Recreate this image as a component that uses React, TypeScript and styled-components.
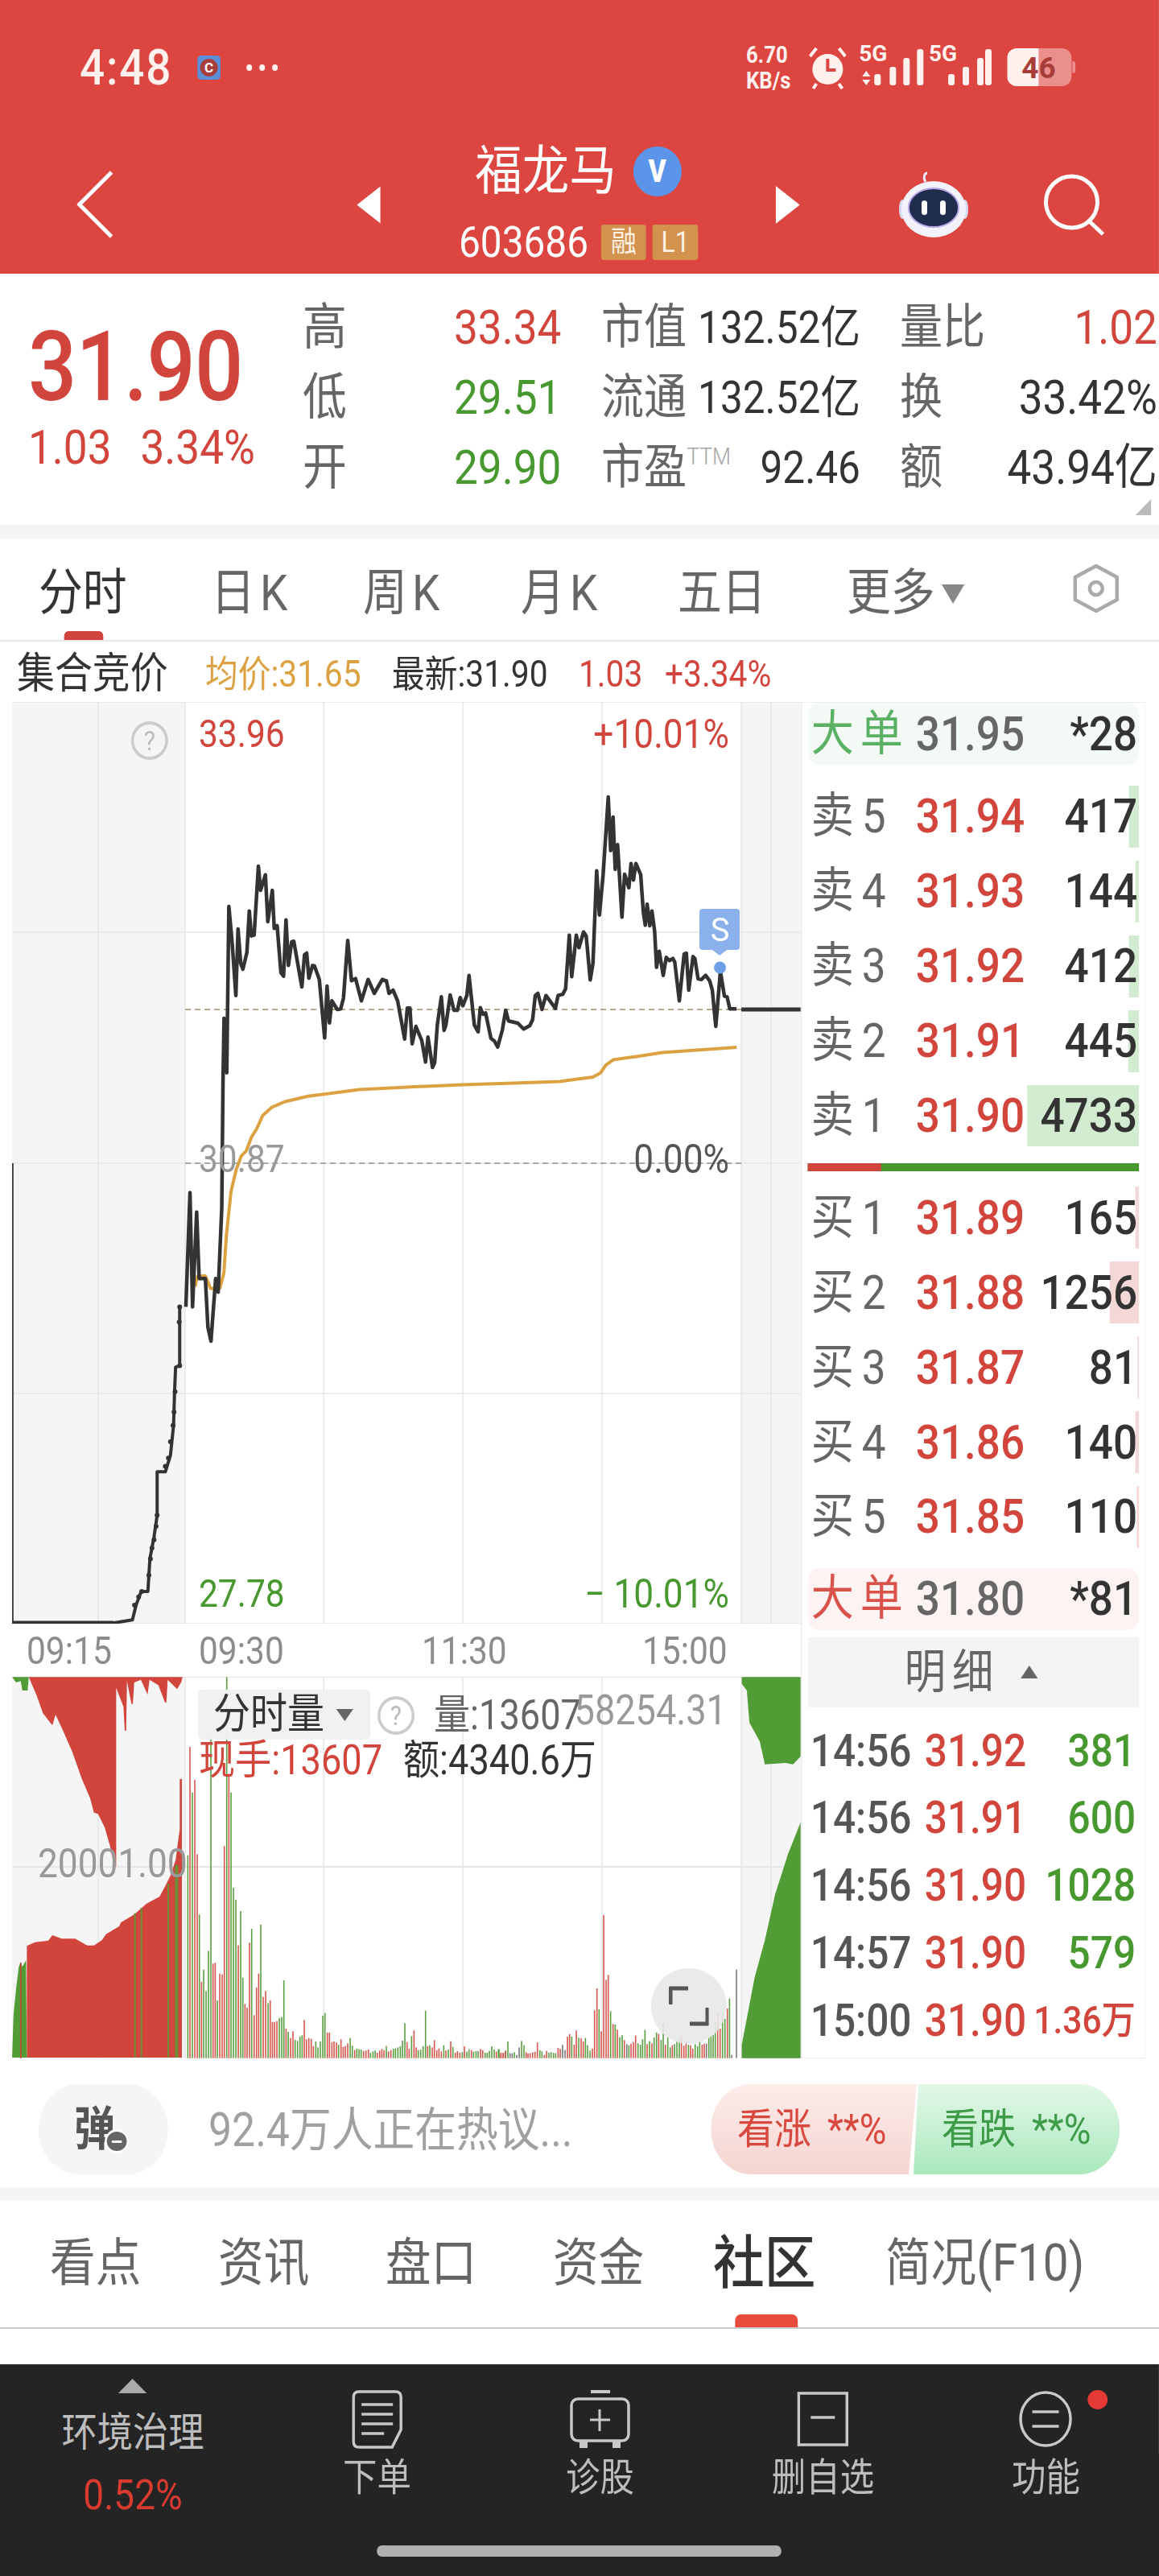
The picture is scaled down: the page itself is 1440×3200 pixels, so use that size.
import React from 'react';
import styled, { createGlobalStyle } from 'styled-components';

// the screenshot is squeezed horizontally, so the whole page is laid out wider and scaled back
const SX = 0.885;
const w = (n: number) => `${(n / SX).toFixed(2)}px`;

const RED = '#d2453c';
const GREEN = '#47982f';
const DARK = '#333333';

const GlobalStyle = createGlobalStyle`
    html, body { margin: 0; padding: 0; background: #fff; overflow: hidden; }
    * { box-sizing: border-box; }
`;

const Page = styled.div`
    width: ${w(1440)};
    height: 3200px;
    transform: scaleX(${SX});
    transform-origin: left top;
    font-family: Roboto, "Noto Sans CJK SC", sans-serif;
    color: ${DARK};
    line-height: 1;
    overflow: hidden;
`;

/* header */
const Header = styled.div`
    height: 340px;
    background: #dc4540;
    color: #fff;
`;
const StatusBar = styled.div`
    height: 168px;
    display: flex;
    align-items: center;
    padding: 0 ${w(104)} 0 ${w(99)};
    color: #fff2ee;
`;
const Clock = styled.span`
    font-size: 62px;
    font-weight: 500;
    letter-spacing: 2px;
    width: ${w(146)};
`;
const Dots = styled.span`
    display: flex;
    gap: ${w(9)};
    margin-left: ${w(32)};
    i { width: 8px; height: 8px; border-radius: 50%; background: #fff2ee; }
`;
const StatusRight = styled.div`
    margin-left: auto;
    display: flex;
    align-items: center;
`;
const Speed = styled.div`
    width: ${w(78)};
    font-size: 29px;
    font-weight: 700;
    line-height: 32px;
`;
const Nav = styled.div`
    height: 172px;
    display: flex;
    align-items: center;
    padding-left: ${w(96)};
`;
const NavTitle = styled.div`
    width: ${w(491)};
    flex: none;
    display: flex;
    flex-direction: column;
    align-items: center;
    gap: 20px;
`;
const TitleLine = styled.div`
    display: flex;
    align-items: center;
    gap: ${w(21)};
    font-size: 66px;
    margin-bottom: 8px;
`;
const VBadge = styled.span`
    width: ${w(60)};
    height: 62px;
    border-radius: 50%;
    background: #5b94e8;
    display: flex;
    align-items: center;
    justify-content: center;
    font-size: 38px;
    font-weight: 900;
`;
const CodeLine = styled.div`
    display: flex;
    align-items: center;
    font-size: 54px;
`;
const Tag = styled.span`
    width: ${w(56)};
    height: 44px;
    margin-left: ${p => w(p.$ml)};
    background: #d4924f;
    border-radius: 4px;
    color: #fff3e6;
    font-size: 36px;
    display: flex;
    align-items: center;
    justify-content: center;
`;

/* quote summary */
const Stats = styled.div`
    position: relative;
    height: 312px;
    display: flex;
    background: #fff;
`;
const PriceBlock = styled.div`
    width: ${w(376)};
    padding: 56px 0 0 ${w(35)};
    color: ${RED};
`;
const BigPrice = styled.div`
    font-size: 120px;
    font-weight: 500;
    line-height: 120px;
    letter-spacing: -1px;
`;
const PriceSub = styled.div`
    display: flex;
    gap: ${w(36)};
    font-size: 60px;
    line-height: 60px;
    margin-top: 10px;
`;
const StatGrid = styled.div`
    display: grid;
    grid-template-columns: ${w(188)} ${w(183)} ${w(322)} ${w(49)} ${w(122)} ${w(198)};
    grid-auto-rows: 87px;
    padding-top: 23px;
    align-items: center;
`;
const StatLabel = styled.span`
    font-size: ${p => p.$size || 60}px;
    color: #666;
`;
const StatValue = styled.span<{ $color?: string; $right?: boolean }>`
    font-size: 60px;
    color: ${p => p.$color || DARK};
    text-align: ${p => (p.$right ? 'right' : 'left')};
`;
const StatPair = styled.div`
    display: flex;
    align-items: center;
    justify-content: space-between;
    font-size: 56px;
`;
const LabelText = styled.span`
    font-size: 60px;
    color: #666;
`;
const Ttm = styled.sup`
    font-size: 30px;
    color: #a5a5a5;
    font-weight: 300;
    vertical-align: 24px;
    line-height: 0;
`;
const CornerMark = styled.i`
    position: absolute;
    right: ${w(10)};
    bottom: 12px;
    width: 0;
    height: 0;
    border-style: solid;
    border-width: 0 0 20px ${w(20)};
    border-color: transparent transparent #bbb transparent;
`;
const Gap = styled.div`
    height: ${p => p.$h}px;
    background: #f5f5f5;
`;

/* period tabs */
const PeriodTabs = styled.div`
    position: relative;
    height: 128px;
    display: flex;
    padding: 37px 0 0 ${w(48)};
    border-bottom: 2px solid #e8e8e8;
`;
const PeriodTab = styled.span<{ $w: number; $on?: boolean; $wide?: boolean }>`
    width: ${p => w(p.$w)};
    font-size: 62px;
    color: ${p => (p.$on ? DARK : '#666')};
    letter-spacing: ${p => (p.$wide ? '7px' : '0')};
`;
const ActiveBar = styled.i`
    position: absolute;
    left: ${w(80)};
    bottom: 0;
    width: ${w(48)};
    height: 11px;
    border-radius: 6px 6px 0 0;
    background: ${RED};
`;
const HexWrap = styled.span`
    position: absolute;
    left: ${w(1333)};
    top: 31px;
`;
const DropTri = styled.i`
    display: inline-block;
    width: 0;
    height: 0;
    margin-left: ${w(8)};
    vertical-align: 8px;
    border-style: solid;
    border-width: 24px ${w(15)} 0 ${w(15)};
    border-color: #888 transparent transparent transparent;
`;
const ChipTri = styled.i`
    width: 0;
    height: 0;
    margin-left: ${w(15)};
    border-style: solid;
    border-width: 15px ${w(11)} 0 ${w(11)};
    border-color: #666 transparent transparent transparent;
`;

const InfoRow = styled.div`
    height: 75px;
    display: flex;
    align-items: center;
    padding: 5px 0 0 ${w(21)};
`;
const InfoText = styled.span<{ $x: number; $color?: string; $size?: number }>`
    width: ${p => w(p.$x)};
    flex: none;
    white-space: nowrap;
    font-size: ${p => p.$size || 46}px;
    color: ${p => p.$color || DARK};
`;

/* chart area */
const ChartRow = styled.div`
    height: 1685px;
    display: flex;
    padding-left: ${w(15)};
`;
const ChartCol = styled.div`
    width: ${w(980)};
    flex: none;
`;
const MainChart = styled.div`
    position: relative;
    height: 1145px;
`;
const VolumeChart = styled.div`
    position: relative;
    height: 474px;
`;
const ChartSvg = styled.svg`
    display: block;
    width: 100%;
    height: 100%;
`;
const TimeAxis = styled.div`
    height: 66px;
    display: flex;
    align-items: center;
    padding: 2px 0 0 ${w(18)};
    font-size: 48px;
    color: #8c8c8c;
`;
const TimeTick = styled.span<{ $w: number }>`
    width: ${p => w(p.$w)};
    flex: none;
`;
const ChartLabel = styled.span<{ $x?: number; $r?: number; $y: number; $color: string; $size?: number }>`
    position: absolute;
    ${p => (p.$r !== undefined ? `right: ${w(p.$r)};` : `left: ${w(p.$x || 0)};`)}
    top: ${p => p.$y}px;
    transform: translateY(-50%);
    color: ${p => p.$color};
    font-size: ${p => p.$size || 48}px;
    white-space: nowrap;
`;
const HelpIcon = styled.span<{ $x: number; $y: number }>`
    position: absolute;
    left: ${p => w(p.$x)};
    top: ${p => p.$y}px;
    width: ${w(46)};
    height: 48px;
    border: 4px solid #ccc;
    border-radius: 50%;
    color: #bbb;
    font-size: 34px;
    display: flex;
    align-items: center;
    justify-content: center;
`;
const VolChip = styled.div`
    position: absolute;
    left: ${w(231)};
    top: 16px;
    width: ${w(214)};
    height: 62px;
    border-radius: 6px;
    background: rgba(240, 240, 240, 0.95);
    display: flex;
    align-items: center;
    padding-left: ${w(19)};
    font-size: 52px;
`;
const ExpandButton = styled.div`
    position: absolute;
    left: ${w(794)};
    top: 362px;
    width: ${w(94)};
    height: 94px;
    border-radius: 50%;
    background: rgba(232, 232, 232, 0.9);
    display: flex;
    align-items: center;
    justify-content: center;
`;

/* order book */
const Book = styled.div`
    width: ${w(428)};
    flex: none;
    height: 1685px;
    padding: 0 ${w(7)};
    border: 1px solid #eee;
    border-width: 1px 1px 1px 2px;
`;
const BigOrder = styled.div<{ $tint: string; $mt: number }>`
    height: 77px;
    margin-top: ${p => p.$mt}px;
    border-radius: 16px;
    background: ${p => p.$tint};
    display: flex;
    align-items: center;
    font-size: 60px;
    font-weight: 500;
    padding: 0 ${w(2)} 0 ${w(4)};
`;
const BigLabel = styled.span<{ $color: string }>`
    width: ${w(130)};
    flex: none;
    color: ${p => p.$color};
    letter-spacing: ${w(8)};
    font-size: 60px;
    font-weight: 400;
`;
const BigPriceCell = styled.span`
    color: #666;
    flex: 1;
`;
const Rows = styled.div<{ $mt: number }>`
    margin-top: ${p => p.$mt}px;
`;
const BookRow = styled.div`
    position: relative;
    height: 92.9px;
    display: flex;
    align-items: center;
    font-size: 60px;
    padding: 0 ${w(2)} 0 ${w(4)};
`;
const RowLabel = styled.span`
    width: ${w(130)};
    flex: none;
    color: #666;
    display: flex;
    gap: ${w(10)};
    position: relative;
`;
const RowPrice = styled.span`
    flex: 1;
    color: ${RED};
    position: relative;
    font-weight: 500;
`;
const RowQty = styled.span`
    position: relative;
    font-weight: 500;
`;
const QtyBar = styled.i<{ $width: number; $color: string }>`
    position: absolute;
    right: 0;
    top: 8px;
    bottom: 8px;
    width: ${p => w(p.$width)};
    background: ${p => p.$color};
`;
const SplitBar = styled.div`
    height: 10px;
    margin-top: 13px;
    display: flex;
    background: ${GREEN};
    i { width: ${w(91)}; background: ${RED}; }
`;
const DetailHead = styled.div`
    height: 87px;
    margin-top: 9px;
    background: #f4f4f4;
    display: flex;
    align-items: center;
    padding-left: ${w(120)};
    font-size: 58px;
    letter-spacing: ${w(8)};
    color: #666;
`;
const UpCaret = styled.i`
    width: 0;
    height: 0;
    margin-left: ${w(26)};
    border-style: solid;
    border-width: 0 ${w(11)} 16px ${w(11)};
    border-color: transparent transparent #666 transparent;
`;
const DetailRow = styled.div`
    height: 83.7px;
    display: flex;
    align-items: center;
    padding: 0 ${w(4)} 0 ${w(3)};
    font-size: 56px;
    font-weight: 500;
`;
const DetailTime = styled.span`
    width: ${w(142)};
    flex: none;
    color: #555;
`;
const DetailPrice = styled.span`
    flex: 1;
    color: ${RED};
`;
const DetailQty = styled.span<{ $color: string; $size?: number }>`
    color: ${p => p.$color};
    font-size: ${p => p.$size || 56}px;
`;

/* comment strip */
const Strip = styled.div`
    height: 160px;
    display: flex;
    align-items: center;
    padding: 32px ${w(49)} 16px ${w(48)};
`;
const Danmu = styled.div`
    position: relative;
    width: ${w(161)};
    height: 112px;
    border-radius: 56px / 56px;
    background: #f5f5f5;
    display: flex;
    align-items: center;
    padding-left: ${w(44)};
    font-size: 58px;
    font-weight: 700;
    color: #555;
`;
const MuteBadge = styled.i`
    position: absolute;
    left: ${w(82)};
    top: 56px;
    width: ${w(30)};
    height: 30px;
    border-radius: 50%;
    background: #666;
    border: 3px solid #fff;
    &::after {
        content: '';
        position: absolute;
        left: 25%;
        right: 25%;
        top: 11px;
        height: 3px;
        background: #fff;
    }
`;
const HotText = styled.span`
    margin-left: ${w(50)};
    padding-top: 2px;
    font-size: 58.5px;
    color: #a0a0a0;
    white-space: nowrap;
`;
const VoteGroup = styled.div`
    margin-left: auto;
    display: flex;
    flex: none;
    height: 112px;
    border-radius: 56px;
    overflow: hidden;
`;
const VoteUp = styled.div`
    width: ${w(256)};
    background: linear-gradient(#fcecea, #f5d5d1);
    clip-path: polygon(0 0, 100% 0, calc(100% - ${w(10)}) 100%, 0 100%);
    color: #d9483f;
    font-size: 52px;
    display: flex;
    align-items: center;
    padding: 2px 0 0 ${w(33)};
`;
const VoteDown = styled.div`
    width: ${w(256)};
    margin-left: ${w(-4)};
    background: linear-gradient(#e3f8e8, #aae8bc);
    clip-path: polygon(${w(6)} 0, 100% 0, 100% 100%, 0 100%);
    color: #3d9b4a;
    font-size: 52px;
    display: flex;
    align-items: center;
    padding: 2px 0 0 ${w(35)};
`;
const Stars = styled.span`
    margin-left: ${w(20)};
`;

/* lower tabs */
const LowerTabs = styled.div`
    position: relative;
    height: 160px;
    display: flex;
    align-items: center;
    padding: 0 0 1px ${w(62)};
    border-bottom: 2px solid #ccc;
`;
const LowerTab = styled.span<{ $w: number; $on?: boolean }>`
    width: ${p => w(p.$w)};
    flex: none;
    white-space: nowrap;
    font-size: ${p => (p.$on ? 72 : 64)}px;
    font-weight: ${p => (p.$on ? 500 : 400)};
    color: ${p => (p.$on ? DARK : '#666')};
`;
const LowerActive = styled.i`
    position: absolute;
    left: ${w(913)};
    bottom: 0;
    width: ${w(78)};
    height: 16px;
    border-radius: 8px 8px 0 0;
    background: #e74c3c;
`;
const Spacer = styled.div`
    height: 44px;
`;

/* footer */
const Footer = styled.div`
    position: relative;
    height: 263px;
    background: #242424;
    display: flex;
    color: #bdbdbd;
`;
const SectorCell = styled.div`
    width: ${w(330)};
    display: flex;
    flex-direction: column;
    align-items: center;
    padding-top: 18px;
    font-size: 50px;
`;
const SectorUp = styled.i`
    width: 0;
    height: 0;
    border-style: solid;
    border-width: 0 ${w(18)} 18px ${w(18)};
    border-color: transparent transparent #aaa transparent;
    margin-bottom: 24px;
`;
const SectorPct = styled.span`
    margin-top: 27px;
    font-size: 52px;
    color: #d93a30;
`;
const FooterItem = styled.div`
    position: relative;
    width: ${w(277)};
    display: flex;
    flex-direction: column;
    align-items: center;
    padding-top: 32px;
    font-size: 48px;
    gap: 12px;
`;
const FooterIcon = styled.svg`
    display: block;
    height: 73px;
    width: ${p => w(p.$w)};
`;
const RedDot = styled.i`
    position: absolute;
    left: ${w(190)};
    top: 32px;
    width: ${w(25)};
    height: 24px;
    border-radius: 50%;
    background: #e53935;
`;
const HomeBar = styled.i`
    position: absolute;
    left: ${w(468)};
    bottom: 24px;
    width: ${w(503)};
    height: 14px;
    border-radius: 7px;
    background: #b0b0b0;
`;

/* ---- chart data, read off the reference ---- */
type P = number[];
const z3 = (a: P[]) => a.map(([x, y]) => [x / 1.568, y / 1.479 + 1000]);
const z8 = (a: P[]) => a.map(([x, y]) => [225 + x / 3, 980 + y / 3]);
const z9 = (a: P[]) => a.map(([x, y]) => [480 + x / 3, 980 + y / 3]);
const z10 = (a: P[]) => a.map(([x, y]) => [15 + x / 3, 2070 + y / 3]);
const z5 = (a: P[]) => a.map(([x, y]) => [x / 1.568, y / 3 + 2060]);
const toPts = (a: P[]) => a.map(([x, y]) => `${x.toFixed(1)},${y.toFixed(1)}`).join(' ');

const PRE_LINE = z3([[220, 1503], [258, 1497], [265, 1470], [275, 1445], [288, 1445], [292, 1385], [300, 1345], [306, 1305], [306, 1225], [322, 1225], [332, 1195], [338, 1140], [340, 1080], [342, 1033], [350, 1030], [350, 922]]);
const PRE_DOTS = z3([[262, 1470], [270, 1455], [276, 1445], [290, 1415], [293, 1385], [296, 1365], [300, 1350], [304, 1325], [306, 1305], [322, 1215], [328, 1200], [332, 1170], [337, 1140], [339, 1115], [341, 1078], [350, 1030], [349, 950], [350, 922]]);
const PRICE_LINE = [
    ...z3([[362, 922], [370, 712], [375, 922], [383, 748], [388, 870], [400, 870], [405, 960], [411, 985], [420, 870], [425, 895], [432, 740]]),
    ...z8([[156, 1100], [160, 855], [170, 1058], [178, 438], [190, 570], [204, 770], [212, 522], [222, 650], [230, 672], [245, 610], [254, 455], [262, 548], [272, 545], [288, 288], [296, 378], [314, 320], [323, 495], [340, 378], [347, 520], [358, 510], [372, 685], [382, 698], [391, 488], [400, 658], [412, 570], [420, 568], [450, 738], [460, 618], [468, 612], [476, 705], [490, 658], [497, 660], [515, 710], [535, 928], [544, 735], [553, 872], [562, 790], [582, 822], [595, 820], [605, 780], [621, 565], [635, 715], [650, 707], [672, 790], [697, 710], [720, 762], [750, 710], [762, 715]]),
    ...z9([[0, 715], [10, 762], [25, 750], [42, 790], [68, 932], [78, 817], [88, 817], [96, 950], [110, 885], [132, 938], [146, 1018], [155, 925], [172, 1038], [180, 1020], [190, 880], [205, 775], [215, 900], [222, 880], [238, 768], [252, 825], [265, 825], [275, 778], [285, 808], [300, 770], [308, 695], [328, 880], [342, 905], [350, 815], [360, 840], [370, 835], [390, 930], [403, 940], [415, 962], [432, 900], [445, 825], [455, 865], [490, 873], [512, 895], [535, 882], [545, 860], [555, 770], [565, 762], [580, 822], [595, 770], [630, 818], [640, 770], [658, 765], [668, 745], [682, 545], [691, 700], [708, 545], [718, 592], [735, 533], [745, 548], [760, 712], [770, 650], [784, 305], [794, 470], [808, 320], [827, 30], [836, 230], [845, 105], [853, 300], [862, 208], [878, 478], [888, 318], [904, 368], [912, 278], [921, 340], [930, 278], [948, 320], [958, 460], [965, 508], [972, 430], [982, 510], [990, 455], [1000, 530], [1007, 665], [1017, 605], [1032, 695], [1043, 628], [1055, 640], [1068, 632], [1075, 645], [1092, 790], [1110, 615], [1118, 612], [1127, 750], [1143, 625], [1150, 632], [1162, 708], [1175, 710], [1190, 695], [1205, 715], [1215, 750], [1228, 885], [1245, 680], [1260, 772], [1270, 775], [1280, 820], [1305, 820]]),
];
const AVG_LINE = z3([[380, 885], [385, 865], [400, 865], [410, 888], [428, 888], [436, 860], [441, 790], [450, 710], [460, 670], [470, 645], [480, 635], [490, 610], [500, 595], [512, 570], [530, 555], [555, 545], [600, 535], [640, 530], [700, 523], [800, 518], [900, 514], [1000, 511], [1090, 508], [1130, 503], [1155, 500], [1170, 492], [1180, 478], [1195, 468], [1240, 462], [1290, 455], [1435, 445]]);

const PRE_RED_TOP = z10([[62, 40], [92, 110], [115, 175], [150, 220], [162, 180], [190, 240], [225, 320], [260, 420], [290, 490], [305, 545], [320, 550], [345, 600], [365, 670], [380, 745], [388, 745], [388, 80], [415, 150], [420, 240], [425, 240], [428, 55], [445, 140], [450, 140], [455, 60], [480, 50], [505, 105], [512, 50], [545, 70], [570, 135], [575, 135], [580, 50], [615, 85], [630, 60], [635, 40]]);
const PRE_GREEN_TOP = z10([[0, 40], [15, 60], [32, 55], [38, 90], [58, 90], [62, 40]]);
const PRE_RED_BOTTOM = z10([[55, 1458], [55, 1042], [85, 1028], [135, 1022], [150, 1002], [185, 1015], [235, 1015], [280, 1040], [305, 1040], [335, 1020], [350, 998], [400, 968], [405, 955], [455, 925], [500, 885], [550, 858], [575, 810], [590, 780], [610, 720], [620, 640], [625, 610], [625, 420], [633, 420], [633, 1458]]);
const PRE_GREEN_BOTTOM = z10([[0, 1458], [5, 1300], [15, 1200], [25, 1120], [32, 1100], [38, 1120], [52, 1095], [55, 1458]]);
const AFTER_TOP = z5([[1445, 70], [1445, 95], [1455, 120], [1460, 240], [1480, 310], [1490, 395], [1530, 390], [1545, 395], [1560, 365], [1560, 70]]);
const AFTER_BOTTOM = z5([[1445, 1490], [1445, 1440], [1470, 1190], [1490, 1050], [1510, 880], [1535, 730], [1560, 610], [1560, 1490]]);

const BARS_LEFT = '10,705,g 18,300,r 27,470,g 36,423,r 45,700,r 53,925,g 61,1175,r 69,1130,g 78,1210,g 87,1060,g 96,255,g 104,1108,r 112,1105,r 120,1245,g 129,1145,r 138,1148,r 146,670,r 155,40,g 163,400,r 171,470,g 180,825,g 189,870,g 198,1040,r 207,912,g 215,1160,g 223,1258,r 231,1272,r 240,1030,r 248,978,g 257,1300,r 266,1197,r 274,1145,r 282,962,g 291,1232,r 300,1210,r 309,1255,g 317,1245,r 325,1325,r 333,1325,r 342,1322,r 351,1310,g 360,1306,g 368,1170,g 376,1350,r 384,1362,g 393,1385,r 402,1360,r 410,1392,g 419,1396,g 428,1380,g 436,1375,g 444,1318,r 452,1390,r 461,1385,r 470,1388,r 478,1415,r 487,1398,g 495,1420,g 504,1398,g 513,1302,g 521,1292,g 530,1365,r 538,1365,r 547,1400,r 555,1398,r 564,1402,r 572,1410,g 581,1390,r 589,1418,r 597,1415,r 606,1405,r 615,1385,g 623,1413,g 632,1430,r 640,1425,g 648,1427,g 656,1428,g 665,1433,r 674,1432,r 683,1428,r 691,1440,g 700,1435,g 708,1432,g 716,1440,r 725,1432,r 733,1426,r 741,1430,r 750,1415,g 758,1435,r 767,1430,r 776,1425,g 784,1424,g 793,1420,g 802,1416,g 810,1395,g 819,1330,g 827,1400,r 835,1425,r 844,1378,g 853,1357,r 861,1420,r 869,1430,g 878,1428,g 887,1415,g 896,1283,g 904,1415,r 912,1412,g 921,1420,r 929,1393,r 938,1430,r 946,1424,r 955,1435,r 964,1412,g 972,1432,r 981,1428,g 990,1397,r 998,1418,g 1007,1440,r 1015,1434,r 1024,1440,r 1033,1438,g 1041,1416,r 1050,1436,g 1058,1427,g 1067,1430,r 1075,1436,g 1084,1434,g 1092,1434,g 1101,1426,r 1109,1430,r 1118,1440,g 1126,1440,g 1134,1433,g 1143,1416,g 1152,1428,g 1160,1436,r 1168,1426,g 1177,1440,r 1186,1440,r 1194,1432,g';
const BARS_RIGHT = '0,828,g 7,842,r 15,842,r 24,833,r 33,798,g 41,842,k 49,842,k 57,838,g 66,848,k 75,820,k 84,796,g 93,812,g 101,838,r 108,843,r 116,842,r 125,838,r 134,836,r 143,802,r 152,830,g 160,835,g 169,848,r 177,833,r 186,840,g 194,838,g 203,840,g 211,842,g 220,822,r 228,826,r 237,811,k 246,830,k 255,780,r 263,770,r 271,780,g 280,810,r 288,757,r 297,784,g 306,786,r 314,798,r 322,785,g 330,812,g 339,832,g 348,825,r 356,682,r 365,600,r 373,678,g 381,760,r 390,327,r 399,568,r 407,550,r 416,685,g 425,733,r 433,735,g 441,754,r 450,782,g 459,775,g 467,793,r 476,808,k 484,812,g 492,806,r 501,800,r 509,776,r 518,805,g 527,810,g 535,790,g 544,755,g 552,808,r 561,797,g 570,805,r 578,783,g 587,765,g 595,770,r 604,792,g 612,732,g 620,810,r 629,782,g 638,820,g 646,812,r 654,808,g 663,796,g 672,782,g 680,775,r 689,814,r 697,794,r 706,810,g 714,812,r 722,825,r 731,808,g 740,816,g 748,798,g 757,810,r 765,806,r 773,806,k 782,780,g 790,776,g 798,772,g 806,726,g 815,694,r 824,750,r 833,692,g 842,714,g 851,675,r 859,638,g 867,848,k 885,530,k';
const BAR_COLOR: Record<string, string> = { r: '#d5564e', g: '#5b9f42', k: '#777' };
const BOTTOM = 2556.7;
const parseBars = (s: string, x0: number, y0: number) => s.split(' ').map(item => {
    const [x, y, c] = item.split(',');
    return { x: x0 + Number(x) / 3, top: y0 + Number(y) / 3, color: BAR_COLOR[c] };
});
const VOLUME_BARS = [...parseBars(BARS_LEFT, 230, 2070), ...parseBars(BARS_RIGHT, 620, 2270)];

const GRID_X = [122, 230, 402, 575, 748, 921, 958];

const SELLS = [
    { n: 5, price: '31.94', qty: '417', bar: 12 },
    { n: 4, price: '31.93', qty: '144', bar: 4 },
    { n: 3, price: '31.92', qty: '412', bar: 12 },
    { n: 2, price: '31.91', qty: '445', bar: 13 },
    { n: 1, price: '31.90', qty: '4733', bar: 139 },
];
const BUYS = [
    { n: 1, price: '31.89', qty: '165', bar: 4 },
    { n: 2, price: '31.88', qty: '1256', bar: 36 },
    { n: 3, price: '31.87', qty: '81', bar: 2 },
    { n: 4, price: '31.86', qty: '140', bar: 4 },
    { n: 5, price: '31.85', qty: '110', bar: 3 },
];
const TRADES = [
    { t: '14:56', p: '31.92', q: '381', c: GREEN },
    { t: '14:56', p: '31.91', q: '600', c: GREEN },
    { t: '14:56', p: '31.90', q: '1028', c: GREEN },
    { t: '14:57', p: '31.90', q: '579', c: GREEN },
];

const ICON_STROKE = '#c8c8c8';

const CIcon = () => (
    <svg width={w(29)} height="30" viewBox="0 0 29 30" preserveAspectRatio="none">
        <rect width="29" height="30" rx="5" fill="#5b8fd8" />
        <circle cx="14.5" cy="15" r="11" fill="#a83e3c" />
        <text x="14.5" y="21" textAnchor="middle" fontSize="17" fontWeight="700" fill="#fff" fontFamily="Roboto">C</text>
    </svg>
);

const AlarmIcon = () => (
    <svg width={w(46)} height="54" viewBox="0 0 46 54" preserveAspectRatio="none" style={{ marginRight: w(16) }}>
        <circle cx="23" cy="29" r="19" fill="#fff2ee" />
        <path d="M1 13 9 3M45 13 37 3M9 47l-4 6M37 47l4 6" stroke="#fff2ee" strokeWidth="4" />
        <path d="M23 16v14h10" stroke="#dc4540" strokeWidth="4" fill="none" />
    </svg>
);

const Signal = ({ arrows, bars }: { arrows?: boolean; bars: number[] }) => (
    <svg width={w(arrows ? 87 : 78)} height="72" viewBox={`0 0 ${arrows ? 87 : 78} 72`} preserveAspectRatio="none">
        <text x="0" y="28" fontSize="28" fontWeight="700" fill="#fff2ee" fontFamily="Roboto">5G</text>
        {arrows && <path d="M4 47l5-7 5 7zM4 51h10l-5 7z" fill="#fff2ee" />}
        {bars.map((x, i) => (
            <rect key={x} x={x} y={[44, 35, 24, 13][i]} width="8" height={[14, 23, 34, 45][i]} rx="3" fill="#fff2ee" />
        ))}
    </svg>
);

const Battery = () => (
    <svg width={w(85)} height="48" viewBox="0 0 85 48" preserveAspectRatio="none" style={{ marginLeft: w(19) }}>
        <rect x="0" y="0" width="80" height="47" rx="12" fill="#fff" fillOpacity="0.4" />
        <path d="M12 0h27v47H12A12 12 0 0 1 0 35V12A12 12 0 0 1 12 0z" fill="#fff2ee" />
        <path d="M81 16c3 0 4 2 4 4v7c0 2-1 4-4 4z" fill="#fff" fillOpacity="0.4" />
        <text x="39" y="37" textAnchor="middle" fontSize="37" fontWeight="700" fill="#a83c38" fontFamily="Roboto">46</text>
    </svg>
);

const BackIcon = () => (
    <svg width={w(46)} height="84" viewBox="0 0 46 84" preserveAspectRatio="none" style={{ flex: 'none' }}>
        <path d="M43 2 3 42l40 40" fill="none" stroke="#fff" strokeWidth="5" />
    </svg>
);

const SwitchArrow = ({ right }: { right?: boolean }) => (
    <svg width={w(30)} height="47" viewBox="0 0 30 47" preserveAspectRatio="none" style={{ flex: 'none' }}>
        <path d={right ? 'M0 0l30 23.5L0 47z' : 'M30 0 0 23.5 30 47z'} fill="#fff" />
    </svg>
);

const RobotIcon = () => (
    <svg width={w(88)} height="82" viewBox="0 0 88 82" preserveAspectRatio="none" style={{ flex: 'none', marginLeft: w(122) }}>
        <path d="M34 13c-3-4-2-11 2-11" stroke="#e9e6f5" strokeWidth="3" fill="none" />
        <ellipse cx="5" cy="47" rx="4" ry="12" fill="#d7d9f2" />
        <ellipse cx="83" cy="47" rx="4" ry="12" fill="#d7d9f2" />
        <ellipse cx="44" cy="47" rx="40" ry="35" fill="#f2f2fb" />
        <ellipse cx="44" cy="45" rx="31" ry="24" fill="#1f2c4c" stroke="#b4a6e6" strokeWidth="2" />
        <rect x="29" y="36" width="7" height="18" rx="3.5" fill="#fff" />
        <rect x="52" y="36" width="7" height="18" rx="3.5" fill="#fff" />
    </svg>
);

const SearchIcon = () => (
    <svg width={w(78)} height="78" viewBox="0 0 78 78" preserveAspectRatio="none" style={{ flex: 'none', marginLeft: w(93) }}>
        <circle cx="35" cy="36" r="32" fill="none" stroke="#fff" strokeWidth="5" />
        <path d="M57 60 74 76" stroke="#fff" strokeWidth="5" />
    </svg>
);

const HexIcon = () => (
    <svg width={w(58)} height="62" viewBox="0 0 58 62" preserveAspectRatio="none">
        <path d="M29 3 55 17v28L29 59 3 45V17z" fill="none" stroke="#aaa" strokeWidth="4.5" strokeLinejoin="round" />
        <circle cx="29" cy="31" r="8" fill="none" stroke="#aaa" strokeWidth="4.5" />
    </svg>
);

const PriceChart = () => (
    <ChartSvg viewBox="15 872 980 1145" preserveAspectRatio="none">
        <rect x="15" y="872" width="215" height="1145" fill="#f5f5f5" />
        <rect x="921" y="872" width="74" height="1145" fill="#f5f5f5" />
        {GRID_X.map(x => <line key={x} x1={x} x2={x} y1="872" y2="2017" stroke="#e6e6e6" strokeWidth="1.5" />)}
        {[872, 1158, 1445, 1731, 2017].map(y => <line key={y} x1="15" x2="995" y1={y} y2={y} stroke="#e6e6e6" strokeWidth="1.5" />)}
        <line x1="230" x2="921" y1="1254" y2="1254" stroke="#b9a988" strokeWidth="2" strokeDasharray="7 5" />
        <line x1="230" x2="921" y1="1445" y2="1445" stroke="#a8a8a8" strokeWidth="2" strokeDasharray="7 5" />
        <polyline points={toPts(AVG_LINE)} fill="none" stroke="#dca242" strokeWidth="4" strokeLinejoin="round" />
        <line x1="15" x2="15" y1="1445" y2="2017" stroke={DARK} strokeWidth="3.5" />
        <line x1="15" x2="141" y1="2016" y2="2016" stroke={DARK} strokeWidth="5" />
        <polyline points={toPts(PRE_LINE)} fill="none" stroke={DARK} strokeWidth="4" strokeLinejoin="round" />
        {PRE_DOTS.map(([x, y]) => <circle key={`${x}-${y}`} cx={x} cy={y} r="3" fill={DARK} />)}
        <polyline points={toPts(PRICE_LINE)} fill="none" stroke={DARK} strokeWidth="4.5" strokeLinejoin="round" />
        <line x1="921" x2="995" y1="1254" y2="1254" stroke={DARK} strokeWidth="5" />
        <path d="M873 1129h42q4 0 4 4v43q0 4-4 4h-12l-9 7-9-7h-12q-4 0-4-4v-43q0-4 4-4z" fill="#8ab1ec" />
        <circle cx="894.5" cy="1202" r="7.5" fill="#6f9fe8" />
        <text x="894.5" y="1169" textAnchor="middle" fontSize="40" fill="#fff" fontFamily="Roboto">S</text>
    </ChartSvg>
);

const VolumeSvg = () => (
    <ChartSvg viewBox="15 2083 980 474" preserveAspectRatio="none">
        <rect x="15" y="2083" width="215" height="474" fill="#f5f5f5" />
        <rect x="921" y="2083" width="74" height="474" fill="#f5f5f5" />
        {GRID_X.map(x => <line key={x} x1={x} x2={x} y1="2083" y2="2557" stroke="#e6e6e6" strokeWidth="1.5" />)}
        <line x1="15" x2="995" y1="2083" y2="2083" stroke="#e6e6e6" strokeWidth="2" />
        <line x1="15" x2="995" y1="2319" y2="2319" stroke="#e6e6e6" strokeWidth="2" />
        <polygon points={toPts(PRE_RED_TOP)} fill={RED} />
        <polygon points={toPts(PRE_GREEN_TOP)} fill="#519c35" />
        <polygon points={toPts(PRE_RED_BOTTOM)} fill={RED} />
        <polygon points={toPts(PRE_GREEN_BOTTOM)} fill="#519c35" />
        <rect x="25" y="2438" width="1.5" height="119" fill={RED} />
        {[458, 482, 582, 610].map((x, i) => (
            <rect key={x} x={15 + (x - 3) / 3} y={2070 + [920, 900, 810, 740][i] / 3} width={i === 3 ? 4 : 2} height={(1458 - [920, 900, 810, 740][i]) / 3} fill="#6c8f36" />
        ))}
        <polygon points={toPts(AFTER_TOP)} fill="#519c35" />
        <polygon points={toPts(AFTER_BOTTOM)} fill="#519c35" />
        {VOLUME_BARS.map((b, i) => (
            <rect key={i} x={b.x - 0.8} y={b.top} width="1.6" height={BOTTOM - b.top} fill={b.color} />
        ))}
    </ChartSvg>
);

const OrderRow = ({ side, row, tint }: { side: string; row: typeof SELLS[number]; tint: string }) => (
    <BookRow>
        <QtyBar $width={row.bar} $color={tint} />
        <RowLabel>{side}<span>{row.n}</span></RowLabel>
        <RowPrice>{row.price}</RowPrice>
        <RowQty>{row.qty}</RowQty>
    </BookRow>
);

const App = () => (
    <Page>
        <GlobalStyle />
        <Header>
            <StatusBar>
                <Clock>4:48</Clock>
                <CIcon />
                <Dots><i /><i /><i /></Dots>
                <StatusRight>
                    <Speed>6.70<br />KB/s</Speed>
                    <AlarmIcon />
                    <Signal arrows bars={[19, 38, 55, 72]} />
                    <Signal bars={[24, 42, 60, 70]} />
                    <Battery />
                </StatusRight>
            </StatusBar>
            <Nav>
                <BackIcon />
                <span style={{ width: w(301) }} />
                <SwitchArrow />
                <NavTitle>
                    <TitleLine>福龙马<VBadge>V</VBadge></TitleLine>
                    <CodeLine>603686<Tag $ml={16}>融</Tag><Tag $ml={8}>L1</Tag></CodeLine>
                </NavTitle>
                <SwitchArrow right />
                <RobotIcon />
                <SearchIcon />
            </Nav>
        </Header>

        <Stats>
            <PriceBlock>
                <BigPrice>31.90</BigPrice>
                <PriceSub><span>1.03</span><span>3.34%</span></PriceSub>
            </PriceBlock>
            <StatGrid>
                <StatLabel $size={62}>高</StatLabel>
                <StatValue $color={RED}>33.34</StatValue>
                <StatPair><LabelText>市值</LabelText><span>132.52亿</span></StatPair>
                <span />
                <LabelText>量比</LabelText>
                <StatValue $color={RED} $right>1.02</StatValue>

                <StatLabel $size={62}>低</StatLabel>
                <StatValue $color={GREEN}>29.51</StatValue>
                <StatPair><LabelText>流通</LabelText><span>132.52亿</span></StatPair>
                <span />
                <LabelText>换</LabelText>
                <StatValue $right>33.42%</StatValue>

                <StatLabel $size={62}>开</StatLabel>
                <StatValue $color={GREEN}>29.90</StatValue>
                <StatPair><span><LabelText>市盈</LabelText><Ttm>TTM</Ttm></span><span>92.46</span></StatPair>
                <span />
                <LabelText>额</LabelText>
                <StatValue $right>43.94亿</StatValue>
            </StatGrid>
            <CornerMark />
        </Stats>
        <Gap $h={17} />

        <PeriodTabs>
            <PeriodTab $w={214} $on>分时</PeriodTab>
            <PeriodTab $w={189} $wide>日K</PeriodTab>
            <PeriodTab $w={196} $wide>周K</PeriodTab>
            <PeriodTab $w={195} $wide>月K</PeriodTab>
            <PeriodTab $w={210}>五日</PeriodTab>
            <PeriodTab $w={180}>更多<DropTri /></PeriodTab>
            <HexWrap><HexIcon /></HexWrap>
            <ActiveBar />
        </PeriodTabs>

        <InfoRow>
            <InfoText $x={234} $size={53}>集合竞价</InfoText>
            <InfoText $x={232} $color="#dca242">均价:31.65</InfoText>
            <InfoText $x={232}>最新:31.90</InfoText>
            <InfoText $x={107} $color={RED}>1.03</InfoText>
            <InfoText $x={140} $color={RED}>+3.34%</InfoText>
        </InfoRow>

        <ChartRow>
            <ChartCol>
                <MainChart>
                    <PriceChart />
                    <HelpIcon $x={148} $y={24}>?</HelpIcon>
                    <ChartLabel $x={232} $y={40} $color={RED}>33.96</ChartLabel>
                    <ChartLabel $r={89} $y={40} $color={RED} $size={50}>+10.01%</ChartLabel>
                    <ChartLabel $x={232} $y={568} $color="#999">30.87</ChartLabel>
                    <ChartLabel $r={89} $y={568} $color="#555" $size={50}>0.00%</ChartLabel>
                    <ChartLabel $x={232} $y={1108} $color={GREEN}>27.78</ChartLabel>
                    <ChartLabel $r={89} $y={1108} $color={GREEN} $size={50}>− 10.01%</ChartLabel>
                </MainChart>
                <TimeAxis>
                    <TimeTick $w={214}>09:15</TimeTick>
                    <TimeTick $w={277}>09:30</TimeTick>
                    <TimeTick $w={274}>11:30</TimeTick>
                    <TimeTick $w={110}>15:00</TimeTick>
                </TimeAxis>
                <VolumeChart>
                    <VolumeSvg />
                    <ChartLabel $x={32} $y={232} $color="#999" $size={50}>20001.00</ChartLabel>
                    <VolChip>分时量<ChipTri /></VolChip>
                    <HelpIcon $x={454} $y={24}>?</HelpIcon>
                    <ChartLabel $x={524} $y={47} $color="#666" $size={51}>量:13607</ChartLabel>
                    <ChartLabel $r={92} $y={41} $color="#999" $size={51}>58254.31</ChartLabel>
                    <ChartLabel $x={232} $y={103} $color={RED} $size={51}>现手:13607</ChartLabel>
                    <ChartLabel $x={486} $y={103} $color={DARK} $size={51}>额:4340.6万</ChartLabel>
                    <ExpandButton>
                        <svg width={w(50)} height="50" viewBox="0 0 50 50" preserveAspectRatio="none">
                            <path d="M2 23V3h22M48 27v20H26" fill="none" stroke="#555" strokeWidth="5" strokeLinejoin="round" />
                        </svg>
                    </ExpandButton>
                </VolumeChart>
            </ChartCol>

            <Book>
                <BigOrder $tint="#f3f9f4" $mt={0}>
                    <BigLabel $color="#5ab163">大单</BigLabel>
                    <BigPriceCell>31.95</BigPriceCell>
                    <span>*28</span>
                </BigOrder>
                <Rows $mt={18}>
                    {SELLS.map(r => <OrderRow key={r.n} side="卖" row={r} tint="#d3ebd0" />)}
                </Rows>
                <SplitBar><i /></SplitBar>
                <Rows $mt={11}>
                    {BUYS.map(r => <OrderRow key={r.n} side="买" row={r} tint="#f5d7d7" />)}
                </Rows>
                <BigOrder $tint="#fdf3f3" $mt={17}>
                    <BigLabel $color="#d9534a">大单</BigLabel>
                    <BigPriceCell>31.80</BigPriceCell>
                    <span>*81</span>
                </BigOrder>
                <DetailHead>明细<UpCaret /></DetailHead>
                <Rows $mt={12}>
                    {TRADES.map(t => (
                        <DetailRow key={t.t + t.p + t.q}>
                            <DetailTime>{t.t}</DetailTime>
                            <DetailPrice>{t.p}</DetailPrice>
                            <DetailQty $color={t.c}>{t.q}</DetailQty>
                        </DetailRow>
                    ))}
                    <DetailRow>
                        <DetailTime>15:00</DetailTime>
                        <DetailPrice>31.90</DetailPrice>
                        <DetailQty $color={RED} $size={48}>1.36万</DetailQty>
                    </DetailRow>
                </Rows>
            </Book>
        </ChartRow>

        <Strip>
            <Danmu>弹<MuteBadge /></Danmu>
            <HotText>92.4万人正在热议...</HotText>
            <VoteGroup>
                <VoteUp>看涨<Stars>**%</Stars></VoteUp>
                <VoteDown>看跌<Stars>**%</Stars></VoteDown>
            </VoteGroup>
        </Strip>
        <Gap $h={16} />

        <LowerTabs>
            <LowerTab $w={209}>看点</LowerTab>
            <LowerTab $w={208}>资讯</LowerTab>
            <LowerTab $w={208}>盘口</LowerTab>
            <LowerTab $w={199}>资金</LowerTab>
            <LowerTab $w={214} $on>社区</LowerTab>
            <LowerTab $w={300}>简况(F10)</LowerTab>
            <LowerActive />
        </LowerTabs>
        <Spacer />

        <Footer>
            <SectorCell>
                <SectorUp />
                <span>环境治理</span>
                <SectorPct>0.52%</SectorPct>
            </SectorCell>
            <FooterItem>
                <FooterIcon $w={63} viewBox="0 0 63 73" preserveAspectRatio="none">
                    <path d="M9 2h45q7 0 7 7v40l-11 22H9q-7 0-7-7V9q0-7 7-7z" fill="none" stroke={ICON_STROKE} strokeWidth="3.5" />
                    <path d="M12 18h39M12 30h39M12 42h39M12 54h28" stroke={ICON_STROKE} strokeWidth="3.5" />
                </FooterIcon>
                <span>下单</span>
            </FooterItem>
            <FooterItem>
                <FooterIcon $w={75} viewBox="0 0 75 73" preserveAspectRatio="none">
                    <path d="M26 2h24" stroke={ICON_STROKE} strokeWidth="4" />
                    <rect x="2" y="11" width="71" height="52" rx="8" fill="none" stroke={ICON_STROKE} strokeWidth="3.5" />
                    <path d="M37 24v27M25 37h25" stroke={ICON_STROKE} strokeWidth="3" />
                    <path d="M12 64v8h10v-8M53 64v8h10v-8" fill={ICON_STROKE} />
                </FooterIcon>
                <span>诊股</span>
            </FooterItem>
            <FooterItem>
                <FooterIcon $w={64} viewBox="0 0 64 73" preserveAspectRatio="none">
                    <rect x="2" y="4" width="60" height="64" fill="none" stroke={ICON_STROKE} strokeWidth="3.5" />
                    <path d="M17 34h30" stroke={ICON_STROKE} strokeWidth="3.5" />
                </FooterIcon>
                <span>删自选</span>
            </FooterItem>
            <FooterItem>
                <FooterIcon $w={67} viewBox="0 0 67 73" preserveAspectRatio="none">
                    <ellipse cx="33.5" cy="36" rx="31" ry="33" fill="none" stroke={ICON_STROKE} strokeWidth="3.5" />
                    <path d="M17 27h33M17 45h33" stroke={ICON_STROKE} strokeWidth="3.5" />
                </FooterIcon>
                <span>功能</span>
                <RedDot />
            </FooterItem>
            <HomeBar />
        </Footer>
    </Page>
);

export default App;
